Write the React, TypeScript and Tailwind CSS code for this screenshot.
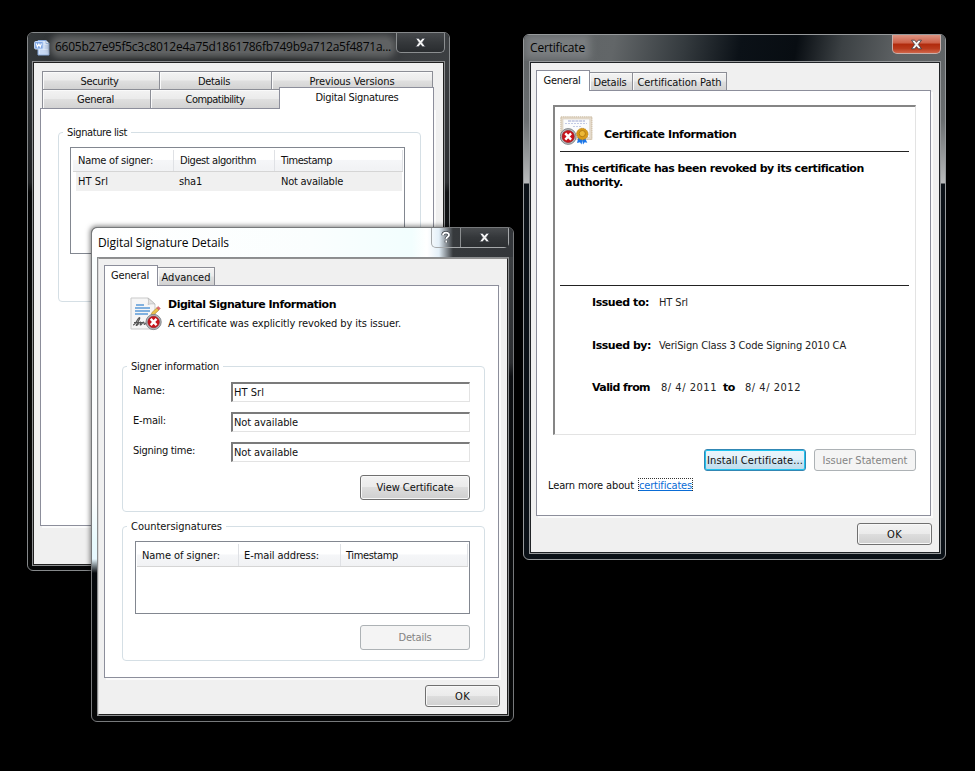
import React, { useLayoutEffect, useRef, useState } from "react";

type FitProps = { w: number; className?: string; children: string };

/* Single line label whose tracking is adjusted so that it spans w pixels. */
function Fit({ w, className = "", children }: FitProps) {
  const ref = useRef<HTMLSpanElement>(null);
  const [spacing, setSpacing] = useState(0);
  useLayoutEffect(() => {
    if (ref.current) {
      const natural = ref.current.getBoundingClientRect().width;
      setSpacing((w - natural) / children.length);
    }
  }, []);
  return (
    <span
      ref={ref}
      className={`block w-fit shrink-0 whitespace-pre h-[14px] leading-[16px] ${className}`}
      style={{ letterSpacing: `${spacing}px` }}
    >
      {children}
    </span>
  );
}

const strong = "font-['DejaVu_Sans',sans-serif] font-bold text-[#000]";
const caption = "font-['Open_Sans','Noto_Sans',sans-serif] text-[12px] text-[#050505] -mt-px";

function CloseGlyph() {
  return (
    <svg width="13" height="11" viewBox="0 0 13 11">
      <path
        d="M1.5 1.2h3.2l1.8 2.2 1.8-2.2h3.2L8.3 5.5l3.2 4.3H8.3L6.5 7.6 4.7 9.8H1.5l3.2-4.3z"
        fill="#f4f4f4"
        stroke="#30343c"
        strokeOpacity=".75"
        strokeWidth="1"
      />
    </svg>
  );
}

function RevokedBadge({ x, y, r }: { x: number; y: number; r: number }) {
  return (
    <g transform={`translate(${x} ${y})`}>
      <circle r={r} fill="#b9bdc0" stroke="#777c80" strokeWidth="0.9" />
      <circle r={r - 1.8} fill="#c9141b" stroke="#8d1a1c" strokeWidth="0.6" />
      <path d="M-2.9-3.1 2.9 3.1M2.9-3.1-2.9 3.1" stroke="#fff" strokeWidth="2.4" />
    </g>
  );
}

function FileIcon() {
  return (
    <svg width="16" height="17" viewBox="0 0 16 17" className="shrink-0">
      <path d="M4 1.5h8l3 3V16H4z" fill="#dbe8fa" stroke="#86a9dc" />
      <path d="M12 1.5v3h3" fill="#fff" stroke="#86a9dc" strokeWidth=".8" />
      <path d="M10.500 7h3.500M10.500 9h3.500M6 12h8M6 14h8" stroke="#b4cbef" />
      <rect x=".6" y="2.500" width="8.500" height="7.500" rx="1" fill="#7fa6e3" stroke="#c9dcf8" />
      <path d="M2.300 4.500l1.100 3.400L4.900 5l1.400 2.900L7.400 4.500" fill="none" stroke="#fff" strokeWidth="1.100" />
    </svg>
  );
}

function SignatureIcon() {
  return (
    <svg width="33" height="34" viewBox="0 0 33 34" className="shrink-0">
      <path d="M1 1h17l7 6v25H1z" fill="#f6f6f6" stroke="#c9c9c9" />
      <path d="M18 1c1 3 .5 5 0 6.500 2-.8 5-.8 7-.5z" fill="#e2e2e2" stroke="#bdbdbd" strokeWidth=".8" />
      <path d="M6 8h8M5 11h15M5 14h15M5 17h13" stroke="#5b9ad8" strokeWidth="1.3" />
      <path d="M3 28c3 0 5-8 6.500-7.500S5 29 6.500 28.500s3-4 4-3.500-1 3 0 3 2-3 3-2.800 0 2.300 1.200 2.200 3-5 4-5.400M4 25.500h9" fill="none" stroke="#555" strokeWidth="1.2" />
      <path d="M20.500 19.500 22 15.500l5-4.800 2 2.200-5 4.800z" fill="#edc34b" stroke="#ad8a3b" strokeWidth=".7" />
      <path d="m26.700 10.900 1.600-1.500 2 2-1.500 1.600z" fill="#e36b70" stroke="#b85a5d" strokeWidth=".5" />
      <RevokedBadge x={23.6} y={25} r={7.600} />
    </svg>
  );
}

function CertificateIcon() {
  return (
    <svg width="33" height="30" viewBox="0 0 33 30" className="shrink-0">
      <rect x=".9" y=".9" width="31" height="22.500" fill="#e6dccd" stroke="#c7b69b" strokeDasharray="1.5 .6" />
      <rect x="3" y="3" width="26.800" height="18.300" fill="#fbfbfc" stroke="#d7cdbd" strokeWidth=".6" />
      <path d="M8 5h17" stroke="#9ba4cf" strokeDasharray="3 .7" />
      <path d="M5 7.500h22M13 10.500h8" stroke="#c3cae4" strokeDasharray="2 1" />
      <path d="m18.500 21-1.500 6 3-.8 1.500 2.300 1.500-7zM24.500 21l2.800 5.800-2.600-.5-1.700 2.200-1.300-7z" fill="#1b76e8" />
      <circle cx="22.300" cy="18" r="5.700" fill="#d99b16" stroke="#b57a0c" strokeWidth=".8" strokeDasharray="1.6 .6" />
      <circle cx="22.300" cy="17.600" r="3.100" fill="#edb936" stroke="#a9700d" strokeWidth=".8" />
      <RevokedBadge x={8.2} y={20.5} r={7.900} />
    </svg>
  );
}

const face = "rounded-[3px] border flex items-center justify-center pb-px shrink-0";

function Button({ w, h, tw, kind = "normal", children }: { w: string; h: string; tw: number; kind?: "normal" | "disabled" | "focus"; children: string }) {
  const look =
    kind === "disabled"
      ? "border-[#adb2b5] bg-[#f4f4f4] text-[#838383]"
      : kind === "focus"
        ? "border-[#3187b4] bg-[linear-gradient(#eaf6fd_0%,#e3f1f9_48%,#cfe5f2_52%,#bedcec_100%)] shadow-[inset_0_0_0_1px_#1fc3ee]"
        : "border-[#707070] bg-[linear-gradient(#f2f2f2_0%,#ebebeb_48%,#dddddd_50%,#cfcfcf_100%)] shadow-[inset_0_0_0_1px_#f8f8f8]";
  return (
    <div className={`${face} ${w} ${h} ${look}`}>
      <Fit w={tw}>{children}</Fit>
    </div>
  );
}

function Tab({ className, w, children }: { className: string; w: number; children: string }) {
  return (
    <div className={`flex justify-center border border-[#8c8e96] bg-[linear-gradient(#f3f3f3_0%,#ebebeb_48%,#dfdfdf_52%,#d2d2d2_100%)] shadow-[inset_1px_1px_0_#fafafa] ${className}`}>
      <Fit w={w}>{children}</Fit>
    </div>
  );
}

function ActiveTab({ className, w, children }: { className: string; w: number; children: string }) {
  return (
    <div className={`relative z-10 flex justify-center border border-b-0 border-[#8c8e9b] bg-white ${className}`}>
      <Fit w={w}>{children}</Fit>
    </div>
  );
}

function Group({ title, tw, className, children }: { title: string; tw: number; className: string; children?: React.ReactNode }) {
  return (
    <div className={`rounded-[4px] border border-[#d5dfe5] ${className}`}>
      <div className="-mt-[8px] ml-[4px] h-[14px] w-fit bg-white px-[4px]">
        <Fit w={tw}>{title}</Fit>
      </div>
      {children}
    </div>
  );
}

function ListHeader({ cells, className = "" }: { cells: { t: string; w: number; box: string }[]; className?: string }) {
  return (
    <div className={`flex border-b border-[#d5d5d5] bg-[linear-gradient(#ffffff_0%,#ffffff_45%,#f5f6f8_50%,#f1f2f4_100%)] ${className}`}>
      {cells.map((c) => (
        <div key={c.t} className={`flex items-center border-r border-[#dfe1e5] ${c.box}`}>
          <Fit w={c.w}>{c.t}</Fit>
        </div>
      ))}
    </div>
  );
}

function PropertiesWindow() {
  return (
    <div className="absolute left-[27px] top-[32px] flex h-[539px] w-[423px] flex-col overflow-hidden rounded-[6px] border border-[#85888a] bg-[#060708]">
      <div className="flex h-[28px] shrink-0 items-start bg-[linear-gradient(90deg,#34383a_0%,#202224_25%,#1c1e1f_60%,#3a3d40_90%,#3c3f42_100%)]">
        <div className="flex h-[28px] items-center pl-[6px]">
          <FileIcon />
          <div className="-mt-px ml-[5px] rounded-[5px] bg-[#606263] shadow-[0_0_6px_5px_#606263]">
            <Fit w={336} className={caption}>
              6605b27e95f5c3c8012e4a75d1861786fb749b9a712a5f4871a...
            </Fit>
          </div>
        </div>
        <div className="ml-[5px] flex h-[20px] w-[49px] items-center justify-center rounded-b-[5px] border border-t-0 border-[#8b8e90] bg-[linear-gradient(#45484b,#35383b_50%,#292c2f)]">
          <CloseGlyph />
        </div>
      </div>
      <div className="flex min-h-0 flex-1">
        <div className="w-[4px] bg-[linear-gradient(#34383a_0%,#1b1d1f_24%,#030405_26%,#050606_100%)]" />
        <div className="w-[413px] border border-[#8b8d8f]">
          <div className="h-full border border-[#202020] bg-[#f0f0f0] pl-[6px] pt-[8px]">
            <div className="flex h-[19px] pl-[2px]">
              <Tab className="h-[19px] w-[118px] pr-[3px] pt-[2px]" w={38}>Security</Tab>
              <Tab className="h-[19px] w-[112px] border-l-0 pr-[3px] pt-[2px]" w={32}>Details</Tab>
              <Tab className="h-[19px] w-[161px] border-l-0 pt-[2px]" w={85}>Previous Versions</Tab>
            </div>
            <div className="flex h-[18px] pl-[2px]">
              <Tab className="h-[18px] w-[109px] border-b-0 border-t-0 pr-[2px] pt-[2px]" w={37}>General</Tab>
              <Tab className="h-[18px] w-[128px] border-x-0 border-b-0 border-t-0 pt-[2px]" w={59}>Compatibility</Tab>
              <ActiveTab className="-mt-[3px] h-[22px] w-[155px] pl-px pt-[2px]" w={83}>Digital Signatures</ActiveTab>
            </div>
            <div className="h-[418px] w-[394px] border border-[#8c8e9b] bg-white pl-[17px] pt-[23px] shadow-[2px_2px_0_#fbfbfb]">
              <Group title="Signature list" tw={60} className="h-[170px] w-[363px]">
                <div className="ml-[11px] mt-[8px] h-[107px] w-[335px] border border-[#828790] px-[2px] pt-[2px]">
                  <ListHeader
                    className="h-[22px] w-[330px]"
                    cells={[
                      { t: "Name of signer:", w: 75, box: "w-[101px] pb-[2px] pl-[5px]" },
                      { t: "Digest algorithm", w: 76, box: "w-[101px] pb-[2px] pl-[6px]" },
                      { t: "Timestamp", w: 51, box: "w-[128px] pb-[2px] pl-[6px]" },
                    ]}
                  />
                  <div className="ml-[3px] flex h-[19px] w-[326px] items-center bg-[#f0f0f0] pb-[2px] pl-[2px]">
                    <div className="w-[101px]"><Fit w={30}>HT Srl</Fit></div>
                    <div className="w-[102px]"><Fit w={23}>sha1</Fit></div>
                    <Fit w={62}>Not available</Fit>
                  </div>
                </div>
              </Group>
            </div>
          </div>
        </div>
        <div className="w-[4px] bg-[linear-gradient(#3c3f42_0%,#2b2d30_24%,#101214_26%,#050606_100%)]" />
      </div>
      <div className="h-[4px] shrink-0" />
    </div>
  );
}

function Field({ label, lw, value, vw, className }: { label: string; lw: number; value: string; vw: number; className: string }) {
  return (
    <div className={`flex items-start ${className}`}>
      <div className="w-[98px] pt-px"><Fit w={lw}>{label}</Fit></div>
      <div className="flex h-[20px] w-[239px] items-start border-b border-l-2 border-r border-t-2 border-b-[#e3e3e3] border-l-[#7b7b7b] border-r-[#e3e3e3] border-t-[#7b7b7b] pl-px pt-px">
        <Fit w={vw}>{value}</Fit>
      </div>
    </div>
  );
}

function DetailsWindow() {
  return (
    <div className="absolute left-[91px] top-[227px] flex h-[495px] w-[423px] flex-col overflow-hidden rounded-[6px] border border-[#77797b] bg-[#060708] shadow-[-1px_-1px_5px_rgba(0,0,0,0.5)]">
      <div className="flex h-[29px] shrink-0 items-start justify-between bg-[linear-gradient(90deg,#ffffff_0px,#fafefe_220px,#f2fefe_320px,#ffffff_335px,#e3eff8_347px,#36393c_361px,#33363a_421px)]">
        <div className="pl-[6px] pt-[8px]">
          <Fit w={131} className={caption}>Digital Signature Details</Fit>
        </div>
        <div className="mr-[4px] flex h-[20px] w-[78px] rounded-b-[5px] border border-t-0 border-[#a5a8aa]">
          <div className="flex w-[29px] items-center justify-center border-r border-[#8b8e90]">
            <svg width="10" height="13" viewBox="0 0 10 13">
              <path d="M2 4.200C2 .9 8 .9 8 4c0 2-2.700 2-2.700 4M5.300 9.500v2" fill="none" stroke="#3c4148" strokeWidth="3.200" />
              <path d="M2 4.200C2 .9 8 .9 8 4c0 2-2.700 2-2.700 4M5.300 9.500v2" fill="none" stroke="#fff" strokeWidth="1.800" />
            </svg>
          </div>
          <div className="flex flex-1 items-center justify-center bg-[linear-gradient(#484b4e,#34373a_50%,#2c2f32)]">
            <CloseGlyph />
          </div>
        </div>
      </div>
      <div className="flex min-h-0 flex-1">
        <div className="w-[5px] bg-[linear-gradient(#fafefe_0px,#fdfdfd_240px,#e8fafd_285px,#e8f8ff_302px,#05080c_316px,#050606_100%)]" />
        <div className="w-[412px] border border-[#8b8d8f]">
          <div className="h-full border border-b-[#202020] border-l-[#d8d8d8] border-r-[#202020] border-t-[#909090] bg-[#f0f0f0] pl-[5px] pt-[6px]">
            <div className="flex h-[20px] items-end">
              <ActiveTab className="h-[21px] w-[54px] translate-y-px pr-[2px] pt-[2px]" w={38}>General</ActiveTab>
              <Tab className="h-[18px] w-[57px] border-b-0 border-l-0 pt-[2px]" w={49}>Advanced</Tab>
            </div>
            <div className="h-[393px] w-[395px] border border-[#8c8e9b] bg-white pl-[17px] pt-[11px] shadow-[2px_2px_0_#fbfbfb]">
              <div className="flex pl-[8px]">
                <SignatureIcon />
                <div className="ml-[5px]">
                  <Fit w={168} className={strong}>Digital Signature Information</Fit>
                  <div className="h-[5px]" />
                  <Fit w={233}>A certificate was explicitly revoked by its issuer.</Fit>
                </div>
              </div>
              <Group title="Signer information" tw={88} className="mt-[35px] h-[146px] w-[363px]">
                <Field className="ml-[10px] mt-[9px] h-[30px]" label="Name:" lw={32} value="HT Srl" vw={30} />
                <Field className="ml-[10px] h-[30px]" label="E-mail:" lw={33} value="Not available" vw={64} />
                <Field className="ml-[10px] h-[33px]" label="Signing time:" lw={62} value="Not available" vw={64} />
                <div className="ml-[237px]"><Button w="w-[110px]" h="h-[25px]" tw={77}>View Certificate</Button></div>
              </Group>
              <Group title="Countersignatures" tw={91} className="mt-[14px] h-[135px] w-[363px]">
                <div className="ml-[12px] mt-[8px] h-[73px] w-[335px] border border-[#828790] px-[1px] pt-[2px]">
                  <ListHeader
                    className="h-[23px] w-[331px]"
                    cells={[
                      { t: "Name of signer:", w: 78, box: "w-[102px] pl-[5px]" },
                      { t: "E-mail address:", w: 75, box: "w-[102px] pl-[5px]" },
                      { t: "Timestamp", w: 52, box: "w-[127px] pl-[5px]" },
                    ]}
                  />
                </div>
                <div className="ml-[237px] mt-[11px]"><Button w="w-[110px]" h="h-[25px]" tw={33} kind="disabled">Details</Button></div>
              </Group>
            </div>
            <div className="mt-[7px] pl-[321px]"><Button w="w-[75px]" h="h-[22px]" tw={15}>OK</Button></div>
          </div>
        </div>
        <div className="w-[4px] bg-[linear-gradient(#3c3f42_0%,#2b2d30_23%,#0c0e11_26%,#050606_100%)]" />
      </div>
      <div className="h-[5px] shrink-0" />
    </div>
  );
}

function InfoRow({ label, lw, value, vw }: { label: string; lw: number; value: string; vw: number }) {
  return (
    <div className="flex h-[43px]">
      <div className="w-[67px]"><Fit w={lw} className={strong}>{label}</Fit></div>
      <Fit w={vw} className="text-[#222]">{value}</Fit>
    </div>
  );
}

function CertificateWindow() {
  return (
    <div className="absolute left-[523px] top-[34px] flex h-[526px] w-[423px] flex-col overflow-hidden rounded-[6px] border border-[#96999b] bg-[#0b1117]">
      <div className="flex h-[26px] shrink-0 items-start justify-between bg-[linear-gradient(100deg,#5f6365_0px,#626668_90px,#343a3e_160px,#0b1117_215px,#080d12_270px,#3c4144_315px,#5d6163_370px,#606466_421px)]">
        <div className="pl-[6px] pt-[6px]">
          <div className="bg-[#85888a]/70 shadow-[0_0_7px_5px_rgba(133,136,138,0.7)]">
            <Fit w={55} className={caption}>Certificate</Fit>
          </div>
        </div>
        <div className="mr-[4px] flex h-[19px] w-[49px] items-center justify-center rounded-b-[5px] border border-t-0 border-[#c9b0ab] bg-[linear-gradient(#dd9483_0%,#cd6047_45%,#b02a0c_50%,#b93a1c_75%,#d0664a_100%)]">
          <CloseGlyph />
        </div>
      </div>
      <div className="flex min-h-0 flex-1">
        <div className="w-[5px] bg-[linear-gradient(#5f6365_0px,#6b6f71_60px,#b9bbbc_122px,#0b1117_123px,#0b1117_100%)]" />
        <div className="w-[412px] border border-[#96999b]">
          <div className="h-full border border-[#202326] bg-[#f0f0f0] pl-[5px] pt-[7px]">
            <div className="flex h-[20px] items-end">
              <ActiveTab className="h-[21px] w-[54px] translate-y-px pr-[2px] pt-[2px]" w={37}>General</ActiveTab>
              <Tab className="h-[18px] w-[43px] border-b-0 border-l-0 pr-[2px] pt-[2px]" w={33}>Details</Tab>
              <Tab className="h-[18px] w-[94px] border-b-0 border-l-0 pt-[2px]" w={84}>Certification Path</Tab>
            </div>
            <div className="h-[426px] w-[395px] border border-[#8c8e9b] bg-white pl-[16px] pt-[14px] shadow-[2px_2px_0_#fbfbfb]">
              <div className="h-[330px] w-[363px] border-b border-l-2 border-r border-t-2 border-b-[#e3e3e3] border-l-[#858585] border-r-[#e3e3e3] border-t-[#858585] pl-[5px] pt-[9px]">
                <div className="flex h-[36px] w-[349px] border-b border-[#222]">
                  <CertificateIcon />
                  <div className="ml-[11px] pt-[11px]"><Fit w={132} className={strong}>Certificate Information</Fit></div>
                </div>
                <div className="h-[134px] w-[349px] border-b border-[#222] pl-[5px] pt-[9px]">
                  <Fit w={298} className={strong}>This certificate has been revoked by its certification</Fit>
                  <Fit w={58} className={strong}>authority.</Fit>
                </div>
                <div className="pl-[32px] pt-[9px]">
                  <InfoRow label="Issued to:" lw={57} value="HT Srl" vw={29} />
                  <InfoRow label="Issued by:" lw={59} value="VeriSign Class 3 Code Signing 2010 CA" vw={187} />
                  <div className="-mt-px flex">
                    <div className="w-[69px]"><Fit w={58} className={strong}>Valid from</Fit></div>
                    <div className="w-[62px]"><Fit w={56} className="text-[#222]">8/ 4/ 2011</Fit></div>
                    <div className="w-[22px]"><Fit w={12} className={strong}>to</Fit></div>
                    <Fit w={56} className="text-[#222]">8/ 4/ 2012</Fit>
                  </div>
                </div>
              </div>
              <div className="mt-[14px] flex gap-[8px] pl-[151px]">
                <Button w="w-[102px]" h="h-[22px]" tw={96} kind="focus">Install Certificate...</Button>
                <Button w="w-[102px]" h="h-[22px]" tw={85} kind="disabled">Issuer Statement</Button>
              </div>
              <div className="-ml-[5px] mt-[7px] flex">
                <Fit w={89}>Learn more about </Fit>
                <div className="ml-px h-[13px] border border-dotted border-[#333]">
                  <Fit w={53} className="-mt-px text-[#0a6cd6] underline">certificates</Fit>
                </div>
              </div>
            </div>
            <div className="mt-[7px] pl-[321px]"><Button w="w-[75px]" h="h-[22px]" tw={15}>OK</Button></div>
          </div>
        </div>
        <div className="w-[4px] bg-[linear-gradient(#606466_0px,#6b6f71_60px,#b9bbbc_122px,#0b1117_123px,#0b1117_100%)]" />
      </div>
      <div className="h-[5px] shrink-0" />
    </div>
  );
}

export default function App() {
  return (
    <div className="relative h-[771px] w-[975px] overflow-hidden bg-black font-['DejaVu_Sans_Condensed','DejaVu_Sans',sans-serif] text-[11px] text-[#101010]">
      <PropertiesWindow />
      <DetailsWindow />
      <CertificateWindow />
    </div>
  );
}
